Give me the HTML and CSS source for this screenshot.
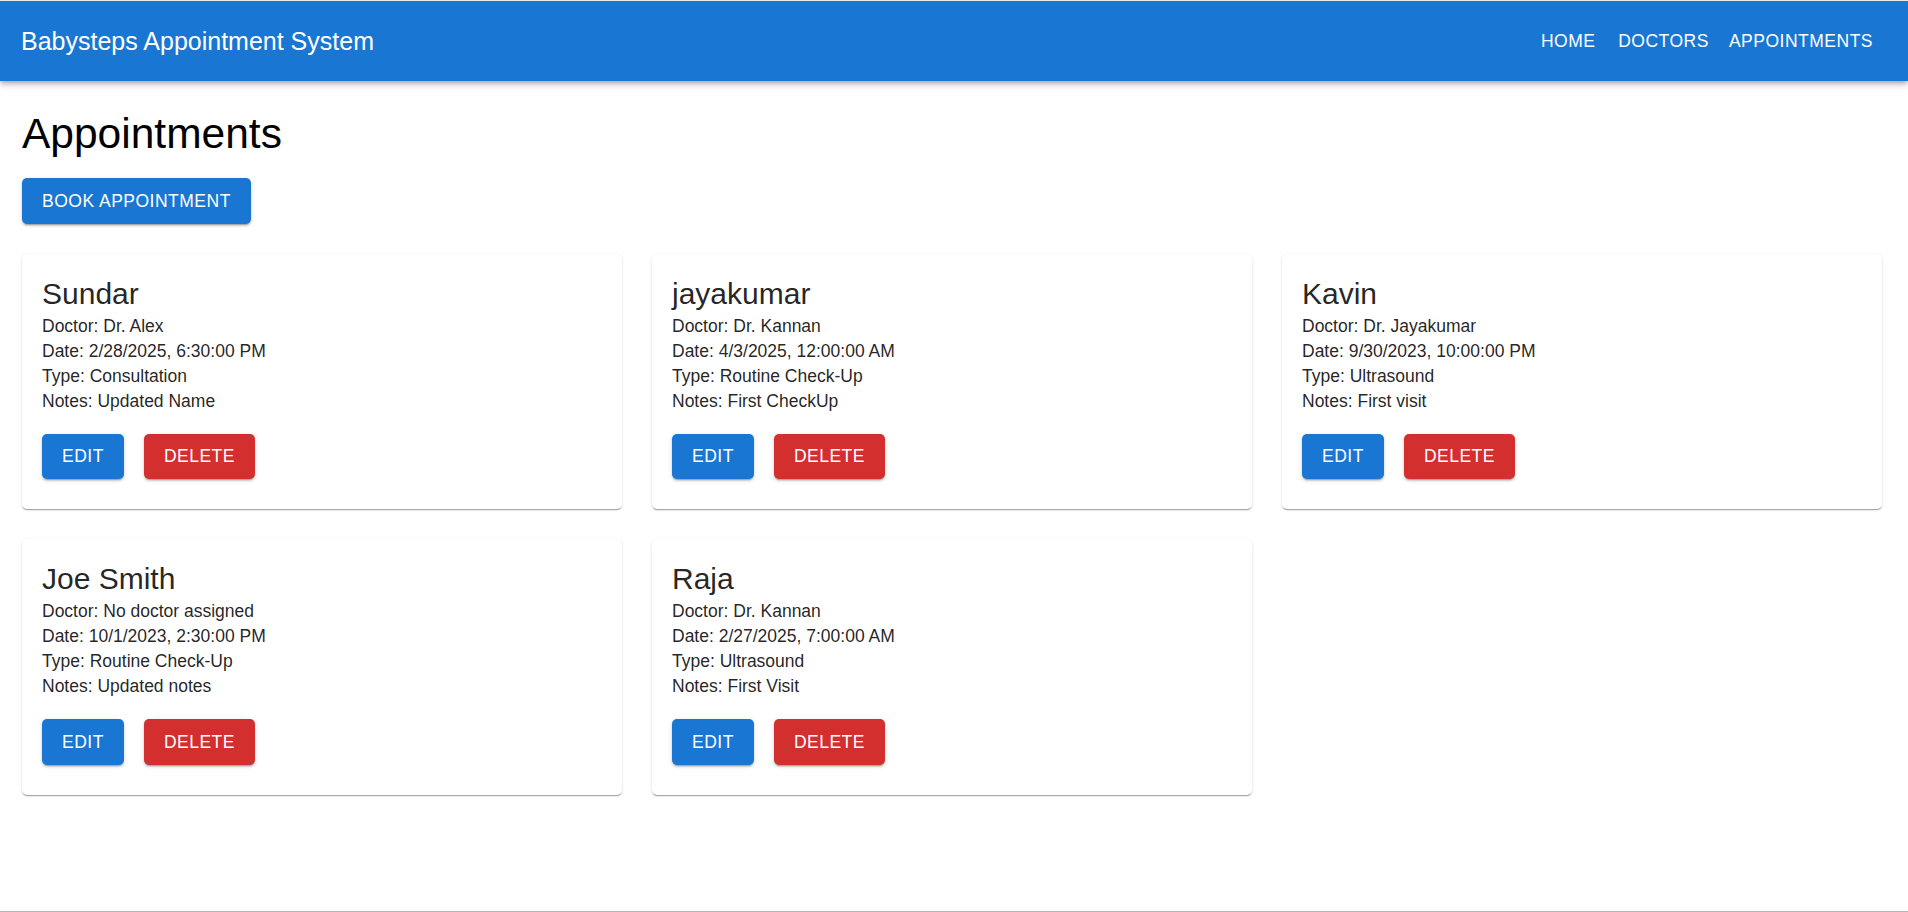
FILE: index.html
```html
<!DOCTYPE html>
<html lang="en">
<head>
<meta charset="utf-8">
<title>Babysteps Appointment System</title>
<link rel="stylesheet" href="styles.css">
</head>
<body>
<div class="page">
  <header class="appbar">
    <div class="brand">Babysteps Appointment System</div>
    <nav class="nav">
      <a class="nav-btn">HOME</a>
      <a class="nav-btn">DOCTORS</a>
      <a class="nav-btn">APPOINTMENTS</a>
    </nav>
  </header>
  <main class="content">
    <h1 class="title">Appointments</h1>
    <button class="btn btn-primary">BOOK APPOINTMENT</button>
    <div class="grid">
      <div class="card">
        <h2 class="name">Sundar</h2>
        <p class="line">Doctor: Dr. Alex</p>
        <p class="line">Date: 2/28/2025, 6:30:00 PM</p>
        <p class="line">Type: Consultation</p>
        <p class="line">Notes: Updated Name</p>
        <div class="actions">
          <button class="btn btn-primary">EDIT</button>
          <button class="btn btn-error">DELETE</button>
        </div>
      </div>
      <div class="card">
        <h2 class="name">jayakumar</h2>
        <p class="line">Doctor: Dr. Kannan</p>
        <p class="line">Date: 4/3/2025, 12:00:00 AM</p>
        <p class="line">Type: Routine Check-Up</p>
        <p class="line">Notes: First CheckUp</p>
        <div class="actions">
          <button class="btn btn-primary">EDIT</button>
          <button class="btn btn-error">DELETE</button>
        </div>
      </div>
      <div class="card">
        <h2 class="name">Kavin</h2>
        <p class="line">Doctor: Dr. Jayakumar</p>
        <p class="line">Date: 9/30/2023, 10:00:00 PM</p>
        <p class="line">Type: Ultrasound</p>
        <p class="line">Notes: First visit</p>
        <div class="actions">
          <button class="btn btn-primary">EDIT</button>
          <button class="btn btn-error">DELETE</button>
        </div>
      </div>
      <div class="card">
        <h2 class="name">Joe Smith</h2>
        <p class="line">Doctor: No doctor assigned</p>
        <p class="line">Date: 10/1/2023, 2:30:00 PM</p>
        <p class="line">Type: Routine Check-Up</p>
        <p class="line">Notes: Updated notes</p>
        <div class="actions">
          <button class="btn btn-primary">EDIT</button>
          <button class="btn btn-error">DELETE</button>
        </div>
      </div>
      <div class="card">
        <h2 class="name">Raja</h2>
        <p class="line">Doctor: Dr. Kannan</p>
        <p class="line">Date: 2/27/2025, 7:00:00 AM</p>
        <p class="line">Type: Ultrasound</p>
        <p class="line">Notes: First Visit</p>
        <div class="actions">
          <button class="btn btn-primary">EDIT</button>
          <button class="btn btn-error">DELETE</button>
        </div>
      </div>
    </div>
  </main>
</div>
</body>
</html>
```

FILE: styles.css
```css
* { box-sizing: border-box; }

html, body {
  margin: 0;
  padding: 0;
  background: #ffffff;
}

body {
  font-family: "Liberation Sans", Arial, Helvetica, sans-serif;
  color: rgba(0, 0, 0, 0.87);
}

.page {
  height: 912px;
  border-top: 1px solid #e6e9ee;
  border-bottom: 1px solid #b3b7c2;
  overflow: hidden;
}

.appbar {
  height: 80px;
  background: #1976d2;
  color: #ffffff;
  display: flex;
  align-items: center;
  justify-content: space-between;
  padding: 0 25px 0 21px;
  box-shadow: 0px 2px 4px -1px rgba(0,0,0,0.2), 0px 4px 5px 0px rgba(0,0,0,0.14), 0px 1px 10px 0px rgba(0,0,0,0.12);
  position: relative;
  z-index: 1;
}

.brand {
  font-size: 25px;
  line-height: 40px;
  font-weight: 400;
}

.nav {
  display: flex;
  align-items: center;
}

.nav-btn {
  display: inline-block;
  min-width: 80px;
  text-align: center;
  font-size: 17.5px;
  line-height: 30.6px;
  letter-spacing: 0.5px;
  padding: 7.5px 10px;
  color: #ffffff;
  cursor: pointer;
}

.content {
  padding: 0 26px 0 22px;
}

.title {
  margin: 27px 0 17.5px;
  font-size: 42.5px;
  line-height: 52.5px;
  font-weight: 400;
  color: #000000;
}

.btn {
  display: inline-block;
  border: 0;
  font-family: "Liberation Sans", Arial, Helvetica, sans-serif;
  font-size: 17.5px;
  line-height: 30.6px;
  letter-spacing: 0.5px;
  font-weight: 400;
  min-width: 80px;
  padding: 7.5px 20px;
  border-radius: 5px;
  color: #ffffff;
  cursor: pointer;
  box-shadow: 0px 3px 1px -2px rgba(0,0,0,0.2), 0px 2px 2px 0px rgba(0,0,0,0.14), 0px 1px 5px 0px rgba(0,0,0,0.12);
}

.btn-primary { background: #1976d2; }
.btn-error { background: #d32f2f; }

.grid {
  margin-top: 30px;
  display: grid;
  grid-template-columns: repeat(3, 1fr);
  gap: 30px;
}

.card {
  background: #ffffff;
  border-radius: 5px;
  padding: 20px 20px 30px;
  color: rgba(0, 0, 0, 0.87);
  box-shadow: 0px 2px 1px -1px rgba(0,0,0,0.2), 0px 1px 1px 0px rgba(0,0,0,0.14), 0px 1px 3px 0px rgba(0,0,0,0.12);
}

.name {
  margin: 0;
  font-size: 30px;
  line-height: 40px;
  font-weight: 400;
}

.line {
  margin: 0;
  font-size: 17.5px;
  line-height: 25px;
}

.actions {
  margin-top: 20px;
  display: flex;
  gap: 20px;
}
```
